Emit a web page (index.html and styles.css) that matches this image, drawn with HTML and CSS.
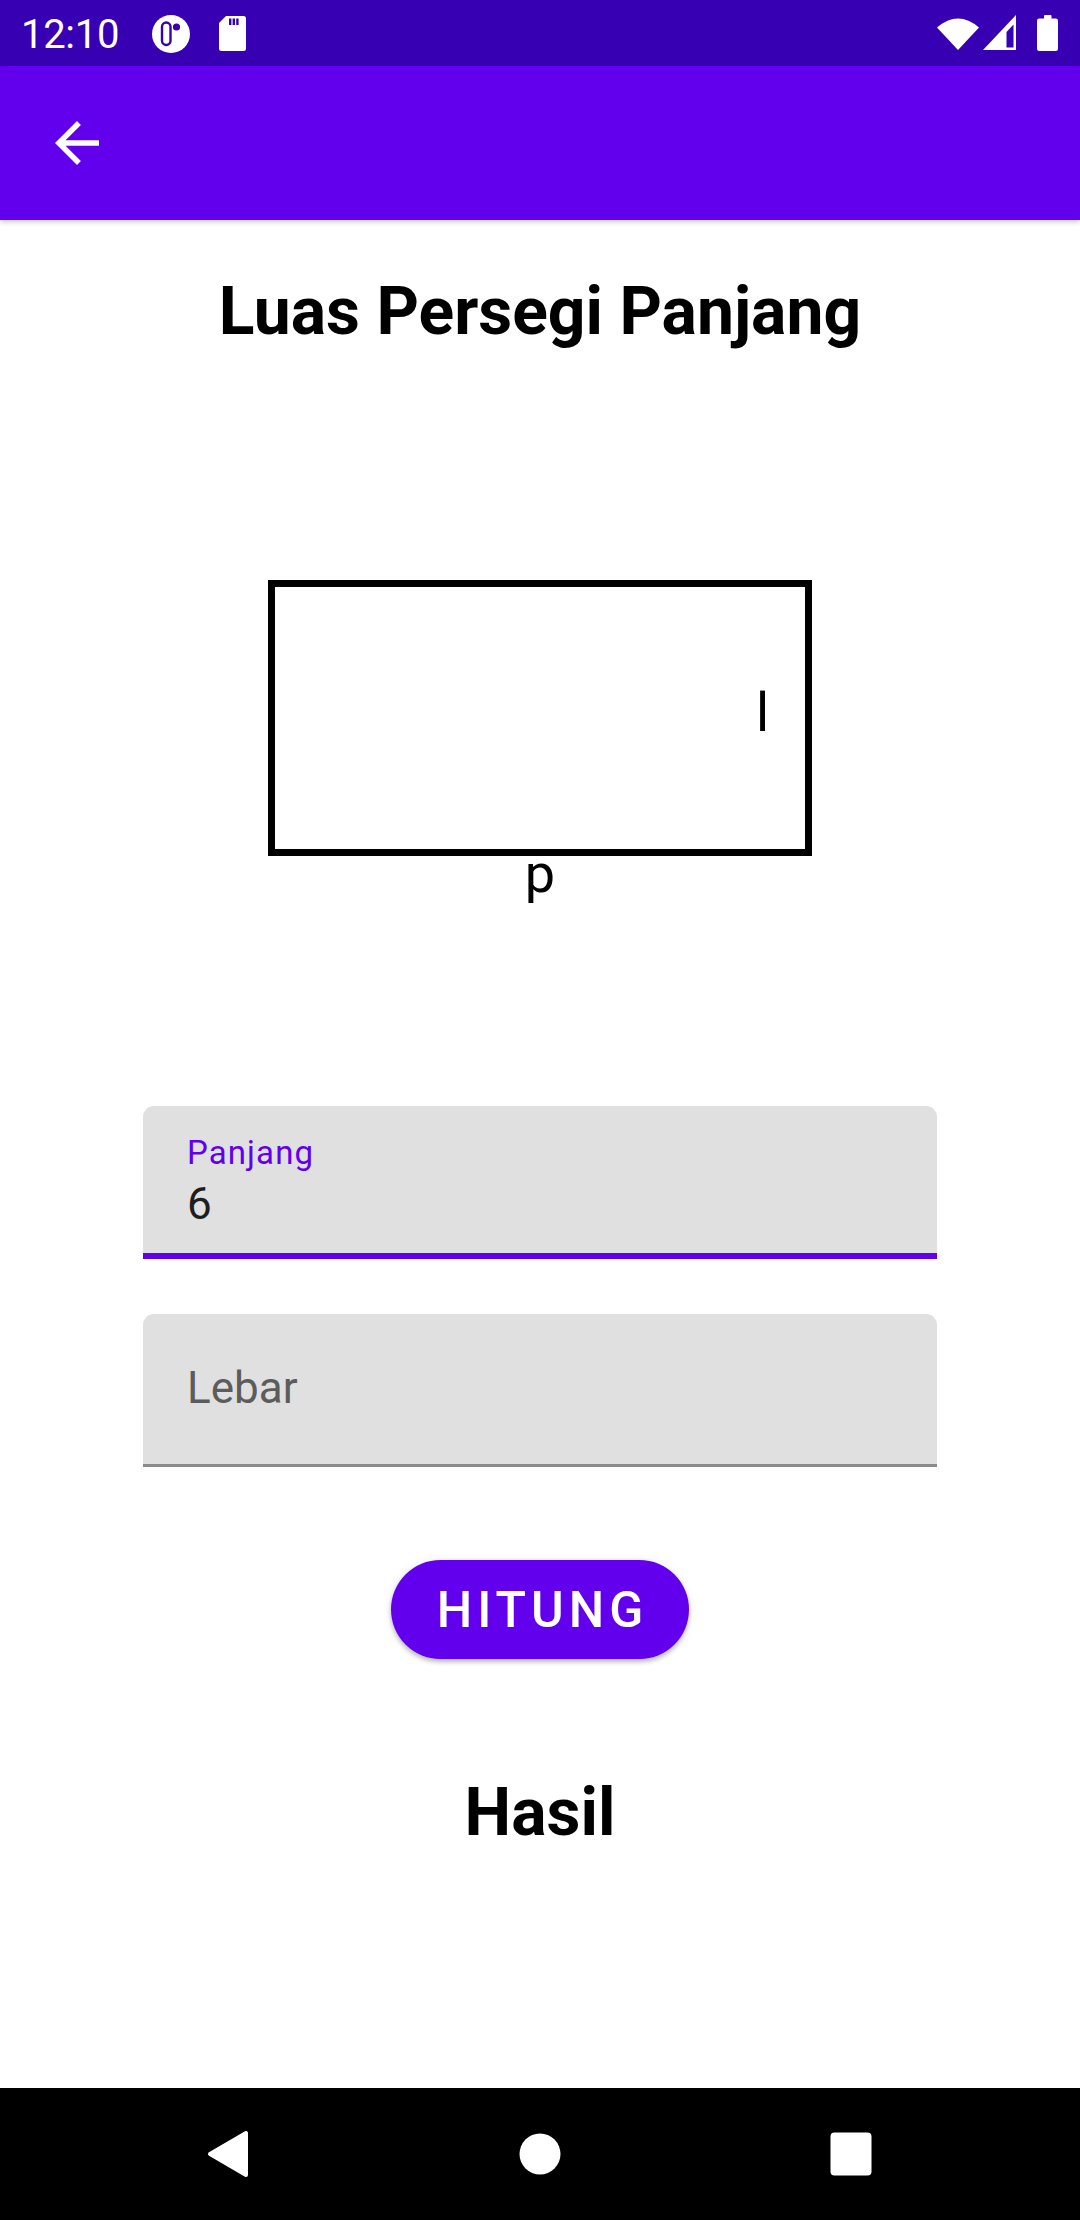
FILE: index.html
```html
<!DOCTYPE html>
<html lang="id">
<head>
<meta charset="utf-8">
<title>Luas Persegi Panjang</title>
<link rel="stylesheet" href="styles.css">
</head>
<body>
<div class="screen">
  <div class="statusbar">
    <span class="clock">12:10</span>
    <svg class="ic-app" width="40" height="40" viewBox="0 0 40 40">
      <circle cx="20" cy="20" r="19" fill="#fff"/>
      <rect x="11" y="8.5" width="8.5" height="22.5" rx="4.25" fill="#fff" stroke="#3700B3" stroke-width="2.4"/>
      <circle cx="25.5" cy="13" r="3.6" fill="#3700B3"/>
    </svg>
    <svg class="ic-sd" width="27" height="35" viewBox="0 0 27 35">
      <path d="M7 0H24.5a2.5 2.5 0 0 1 2.5 2.5V32.5a2.5 2.5 0 0 1-2.5 2.5H2.5A2.5 2.5 0 0 1 0 32.5V7Z" fill="#fff"/>
      <rect x="10" y="2.5" width="2.4" height="6.5" fill="#3700B3"/>
      <rect x="13.6" y="2.5" width="2.4" height="6.5" fill="#3700B3"/>
      <rect x="17.2" y="2.5" width="2.4" height="6.5" fill="#3700B3"/>
    </svg>
    <span class="spacer"></span>
    <svg class="ic-wifi" width="42" height="34" viewBox="0 0 42 34">
      <path d="M21 34L0 11.5Q21 -6.5 42 11.5Z" fill="#fff"/>
    </svg>
    <svg class="ic-signal" width="33" height="35" viewBox="0 0 33 35">
      <path d="M0 35L33 0V35Z" fill="#fff"/>
      <path d="M23.5 17L30.5 9.5V32.5H23.5Z" fill="#3700B3"/>
    </svg>
    <svg class="ic-battery" width="21" height="36" viewBox="0 0 21 36">
      <rect x="7" y="0" width="7.5" height="4" rx="1" fill="#fff"/>
      <rect x="0" y="3.5" width="21" height="32.5" rx="2.2" fill="#fff"/>
    </svg>
  </div>

  <header class="appbar">
    <svg class="ic-back" width="66" height="66" viewBox="0 0 24 24">
      <path d="M20 11H7.83l5.59-5.59L12 4l-8 8 8 8 1.41-1.41L7.83 13H20v-2z" fill="#fff"/>
    </svg>
  </header>

  <main class="content">
    <h1 class="title">Luas Persegi Panjang</h1>

    <div class="figure">
      <div class="rect"></div>
      <span class="label-l">l</span>
      <span class="label-p">p</span>
    </div>

    <div class="field field-focused">
      <span class="field-label">Panjang</span>
      <span class="field-value">6</span>
    </div>

    <div class="field field-idle">
      <span class="field-hint">Lebar</span>
    </div>

    <button class="btn">HITUNG</button>

    <h2 class="result">Hasil</h2>
  </main>

  <nav class="navbar">
    <span class="nav-item">
      <svg width="44" height="50" viewBox="0 0 44 50">
        <path d="M39 4V46L3 25Z" fill="#fff" stroke="#fff" stroke-width="4" stroke-linejoin="round"/>
      </svg>
    </span>
    <span class="nav-item">
      <svg width="42" height="42" viewBox="0 0 42 42">
        <circle cx="21" cy="21" r="20.5" fill="#fff"/>
      </svg>
    </span>
    <span class="nav-item">
      <svg width="42" height="44" viewBox="0 0 42 44">
        <rect x="0.5" y="0.5" width="41" height="43" rx="4" fill="#fff"/>
      </svg>
    </span>
  </nav>
</div>
</body>
</html>
```
FILE: styles.css
```css
* { box-sizing: border-box; }

html, body {
  margin: 0;
  padding: 0;
  background: #fff;
}

body {
  font-family: Roboto, "Noto Sans", "Liberation Sans", sans-serif;
  color: #000;
}

.screen {
  width: 1080px;
  height: 2220px;
  display: flex;
  flex-direction: column;
  overflow: hidden;
}

/* status bar */
.statusbar {
  height: 66px;
  flex: none;
  background: #3700B3;
  display: flex;
  align-items: flex-start;
  padding: 0 22px 0 21px;
  color: #fff;
}

.clock {
  font-size: 40px;
  line-height: 40px;
  margin-top: 15px;
  letter-spacing: -0.3px;
}

.ic-app { margin-left: 32px; margin-top: 14px; }
.ic-sd { margin-left: 28px; margin-top: 16px; }
.spacer { flex: 1; }
.ic-wifi { margin-top: 16px; }
.ic-signal { margin-left: 4px; margin-top: 15px; }
.ic-battery { margin-left: 21px; margin-top: 15px; }

/* app bar */
.appbar {
  height: 154px;
  flex: none;
  background: #6200EE;
  display: flex;
  align-items: center;
  padding-left: 44px;
  box-shadow: 0 2px 5px rgba(0, 0, 0, 0.22);
  position: relative;
  z-index: 1;
}

.ic-back { display: block; }

/* content */
.content {
  flex: 1;
  display: flex;
  flex-direction: column;
  align-items: center;
}

.title {
  margin: 53px 0 0;
  font-size: 66px;
  line-height: 77px;
  font-weight: 700;
  text-align: center;
}

.figure {
  position: relative;
  width: 544px;
  height: 330px;
  margin-top: 230px;
}

.rect {
  width: 544px;
  height: 276px;
  border: 7px solid #000;
}

.label-l,
.label-p {
  position: absolute;
  font-size: 54px;
  line-height: 54px;
}

.label-l {
  left: 488px;
  top: 106px;
}

.label-p {
  left: 0;
  right: 0;
  top: 267px;
  text-align: center;
}

.field {
  width: 794px;
  height: 153px;
  background: #E0E0E0;
  border-radius: 11px 11px 0 0;
  padding-left: 44px;
  display: flex;
  flex-direction: column;
}

.field-focused {
  margin-top: 196px;
  border-bottom: 6px solid #6200EE;
  padding-top: 27px;
}

.field-idle {
  margin-top: 55px;
  border-bottom: 3px solid #8A8A8A;
  padding-top: 48px;
}

.field-label {
  font-size: 33px;
  line-height: 39px;
  letter-spacing: 1.1px;
  color: #6200EE;
}

.field-value {
  margin-top: 6px;
  font-size: 44px;
  line-height: 52px;
  color: #1E1E1E;
}

.field-hint {
  font-size: 44px;
  line-height: 52px;
  color: #5C5C5C;
}

.btn {
  margin-top: 93px;
  width: 298px;
  height: 99px;
  border: none;
  border-radius: 50px;
  background: #6200EE;
  color: #fff;
  font-family: Roboto, "Noto Sans", sans-serif;
  font-size: 50px;
  font-weight: 500;
  letter-spacing: 5px;
  padding: 0 0 0 5px;
  box-shadow: 0 3px 4px rgba(0, 0, 0, 0.22), 0 1px 8px rgba(0, 0, 0, 0.1);
}

.result {
  margin: 115px 0 0;
  font-size: 66px;
  line-height: 77px;
  font-weight: 700;
}

/* nav bar */
.navbar {
  height: 132px;
  flex: none;
  background: #000;
  display: flex;
  justify-content: center;
  align-items: center;
  gap: 179px;
}

.nav-item {
  width: 132px;
  display: flex;
  justify-content: center;
  align-items: center;
}

.nav-item svg { display: block; }
```
